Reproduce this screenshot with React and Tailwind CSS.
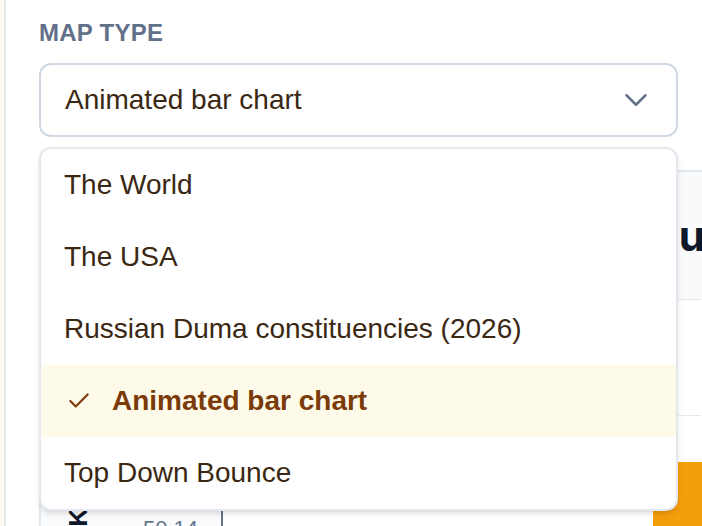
import React from 'react';
import { Check, ChevronDown } from 'lucide-react';

const options = [
    { name: 'The World' },
    { name: 'The USA' },
    { name: 'Russian Duma constituencies (2026)' },
    { name: 'Animated bar chart', selected: true },
    { name: 'Top Down Bounce' },
];

const App = () => {
    return (
        <div className="w-[702px] h-[526px] overflow-hidden flex bg-white font-['Liberation_Sans',Arial,sans-serif]">
            <div className="w-[4px] shrink-0 bg-[#fcf9ef]"></div>
            <div className="flex-1 border-l-2 border-[#e3e8ef] pl-[33px] pt-[20px]">
                <h2 className="text-[24px] leading-[26px] font-bold uppercase tracking-[0.01em] text-[#627089]">Map type</h2>

                <div className="relative mt-[17px] w-[639px]">
                    <button className="w-full h-[74px] flex items-center justify-between pl-[24px] pr-[21px] border-2 border-[#cfd8e3] rounded-[12px] bg-white">
                        <span className="text-[28px] text-[#3a2812]">Animated bar chart</span>
                        <ChevronDown className="w-[38px] h-[38px] text-[#64748b]" strokeWidth={1.6} />
                    </button>

                    {/* menu */}
                    <div className="absolute z-10 left-0 top-[84px] w-full bg-white border-2 border-[#e3e8ef] rounded-[12px] shadow-md overflow-hidden">
                        {options.map(option => (
                            <div
                                key={option.name}
                                className={`h-[72px] flex items-center ${option.selected ? 'bg-[#fefae9] pl-[25px]' : 'pl-[23px]'}`}
                            >
                                {option.selected && (
                                    <Check className="w-[26px] h-[26px] mr-[20px] text-[#7a3b09]" strokeWidth={2} />
                                )}
                                <span className={`text-[28px] ${option.selected ? 'font-bold text-[#7a3b09]' : 'text-[#3a2812]'}`}>{option.name}</span>
                            </div>
                        ))}
                    </div>

                    {/* results card under the menu */}
                    <div className="mt-[33px] w-[700px] border-2 border-[#e3e8ef] rounded-[12px] overflow-hidden">
                        <div className="h-[128px] bg-[#f8fafc] border-b border-dotted border-[#cbd5e1] flex items-center pl-[610px]">
                            <span className="text-[42px] font-bold text-[#0f172a] font-['Inter',sans-serif]">Bus</span>
                        </div>
                        <div className="h-[116px] border-b border-dotted border-[#cbd5e1]"></div>
                        <div className="flex">
                            <div className="w-[180px] pt-[92px] flex items-start gap-[52px] pl-[24px] bg-[#fafbfc]">
                                <span className="text-[26px] leading-[26px] font-bold text-[#0f172a] [writing-mode:vertical-rl] rotate-180">UK</span>
                                <span className="text-[22px] mt-[4px] text-[#64748b]">50.14</span>
                            </div>
                            <div className="flex-1 border-l-2 border-[#64748b] pt-[46px] pl-[430px]">
                                <div className="h-[80px] bg-[#f59e0b]"></div>
                            </div>
                        </div>
                    </div>
                </div>
            </div>
        </div>
    );
};

export default App;
